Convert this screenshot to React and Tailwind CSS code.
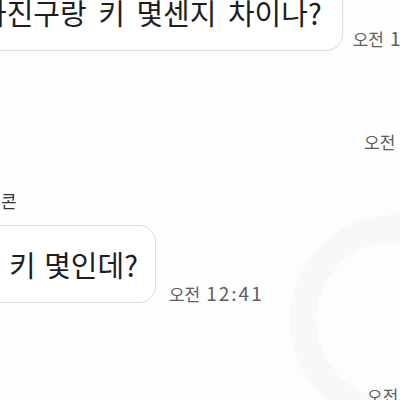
import React from 'react';

const font = "font-['Noto_Sans_CJK_KR','Noto_Sans',sans-serif]";

// time label: digits sit a bit larger and wider than the hangul
const Time = ({ children, className = '' }) => (
  <span className={`whitespace-nowrap text-[#606060] leading-[20px] ${className}`}>
    <span className="text-[17px] mr-[6px]">오전</span>
    <span className="text-[19px] tracking-[2px]">{children}</span>
  </span>
);

const App = () => {
  return (
    <div className={`w-[400px] h-[400px] overflow-hidden bg-[#fdfdfd] relative ${font}`}>
      {/* faint watermark */}
      <div className="absolute left-[290px] top-[215px] w-[210px] h-[210px] rounded-full border-[26px] border-[#f8f8f8]"></div>

      <div className="relative flex flex-col">
        {/* first message */}
        <div className="flex items-end -mt-[27px] -ml-[34px]">
          <div className="bg-white border border-[#dcdcdc] rounded-[17px] pl-[13px] pr-[20px] h-[78px] flex items-center">
            <span className="text-[29px] leading-[36px] text-[#1e1e1e] whitespace-nowrap [word-spacing:5px]">사진구랑 키 몇센지 차이나?</span>
          </div>
          <Time className="ml-[10px] mb-[2px]">12:40</Time>
        </div>

        {/* time only */}
        <div className="mt-[79px] ml-[364px]">
          <Time>12:41</Time>
        </div>

        {/* name */}
        <div className="mt-[35px] ml-[1px] text-[17px] leading-[24px] text-[#333]">콘</div>

        {/* second message */}
        <div className="flex items-end mt-[12px] -ml-[20px]">
          <div className="bg-white border border-[#dcdcdc] rounded-[17px] pl-[28px] pr-[17px] h-[78px] flex items-center">
            <span className="text-[29px] leading-[36px] text-[#1e1e1e] whitespace-nowrap [word-spacing:2px]">키 몇인데?</span>
          </div>
          <Time className="ml-[13px] -mb-[1px]">12:41</Time>
        </div>

        {/* time only */}
        <div className="mt-[81px] ml-[367px]">
          <Time>12:41</Time>
        </div>
      </div>
    </div>
  );
};

export default App;
